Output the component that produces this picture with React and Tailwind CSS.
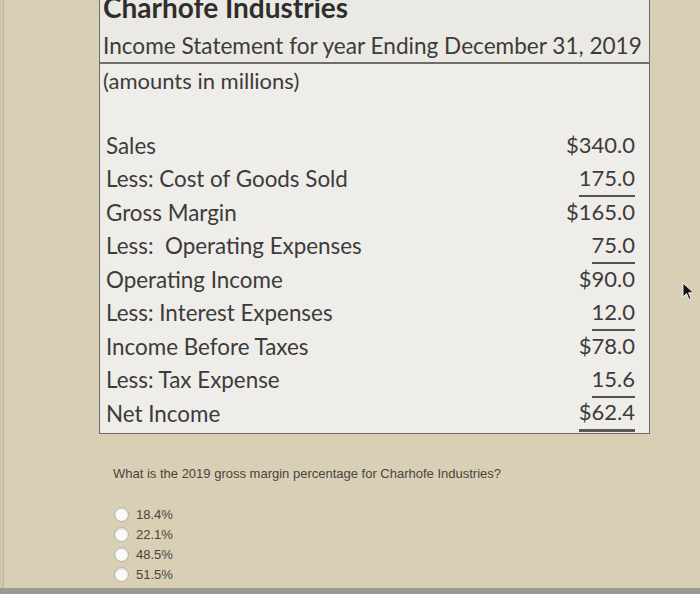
const rows = [
  { label: "Sales", value: "$340.0" },
  { label: "Less: Cost of Goods Sold", value: "175.0", rule: true },
  { label: "Gross Margin", value: "$165.0" },
  { label: "Less:  Operating Expenses", value: "75.0", rule: true },
  { label: "Operating Income", value: "$90.0" },
  { label: "Less: Interest Expenses", value: "12.0", rule: true },
  { label: "Income Before Taxes", value: "$78.0" },
  { label: "Less: Tax Expense", value: "15.6", rule: true },
  { label: "Net Income", value: "$62.4", total: true },
];

const options = ["18.4%", "22.1%", "48.5%", "51.5%"];

export default function App() {
  return (
    <div className="relative w-[700px] h-[594px] overflow-hidden bg-[#d8cfb4] text-[#3d3b39]">
      {/* monitor edge on the left */}
      <div className="absolute left-0 top-0 h-full w-[4px] bg-[#cfc5a8] border-r border-[#bdb49a]" />

      {/* statement table */}
      <div className="ml-[99px] w-[551px] bg-[#eeede9] border-x border-b border-[#6f6d6a] font-['Lato',sans-serif]">
        <div className="h-[28px] px-[3px] flex items-start bg-[#ebe9e4]">
          <span className="text-[28px] font-bold leading-[28px] -mt-[7px] text-[#2f2e2d]">Charhofe Industries</span>
        </div>
        <div className="h-[36px] px-[3px] pt-[3px] flex items-center border-b-2 border-[#6f6d6a] bg-[#ebe9e4]">
          <span className="text-[22.6px] leading-none">Income Statement for year Ending December 31, 2019</span>
        </div>
        <div className="h-[34px] px-[3px] flex items-center">
          <span className="text-[22px] leading-none">(amounts in millions)</span>
        </div>
        <div className="h-[31px]" />
        {rows.map((r) => (
          <div key={r.label} className="h-[33.5px] flex items-center justify-between pl-[6px] pr-[14px]">
            <span className="text-[22.4px] leading-none whitespace-pre">{r.label}</span>
            <span
              className={
                "text-[22px] leading-none pb-[6px] -mb-[6px] " +
                (r.rule ? "border-b-2 border-[#55524f]" : r.total ? "border-b-[3px] border-[#5c5955]" : "border-b-2 border-transparent")
              }
            >
              {r.value}
            </span>
          </div>
        ))}
        <div className="h-[2px]" />
      </div>

      {/* question */}
      <div className="ml-[113px] mt-[32px] font-['Liberation_Sans',Arial,sans-serif] text-[#49453f]">
        <p className="text-[13px] leading-[16px]">What is the 2019 gross margin percentage for Charhofe Industries?</p>
        <div className="mt-[25px] flex flex-col gap-[4px] ml-[1px]">
          {options.map((o) => (
            <label key={o} className="flex items-center gap-[7px] h-[16px]">
              <span className="w-[15px] h-[15px] rounded-full bg-[#fbfbfa] border border-[#b4b0a6] shadow-[inset_0_1px_2px_rgba(0,0,0,0.15)]" />
              <span className="text-[13px] leading-none">{o}</span>
            </label>
          ))}
        </div>
      </div>

      {/* bottom bezel strip */}
      <div className="absolute left-0 bottom-0 w-full h-[6px] bg-[#9c9a93]" />

      {/* mouse cursor */}
      <svg className="absolute left-[682px] top-[282px]" width="14" height="20" viewBox="0 0 14 20">
        <path d="M1 1 L1 15 L4.5 11.5 L7 17.5 L9 16.6 L6.6 10.8 L11.5 10.8 Z" fill="#111" stroke="#eee" strokeWidth="1" />
      </svg>
    </div>
  );
}
